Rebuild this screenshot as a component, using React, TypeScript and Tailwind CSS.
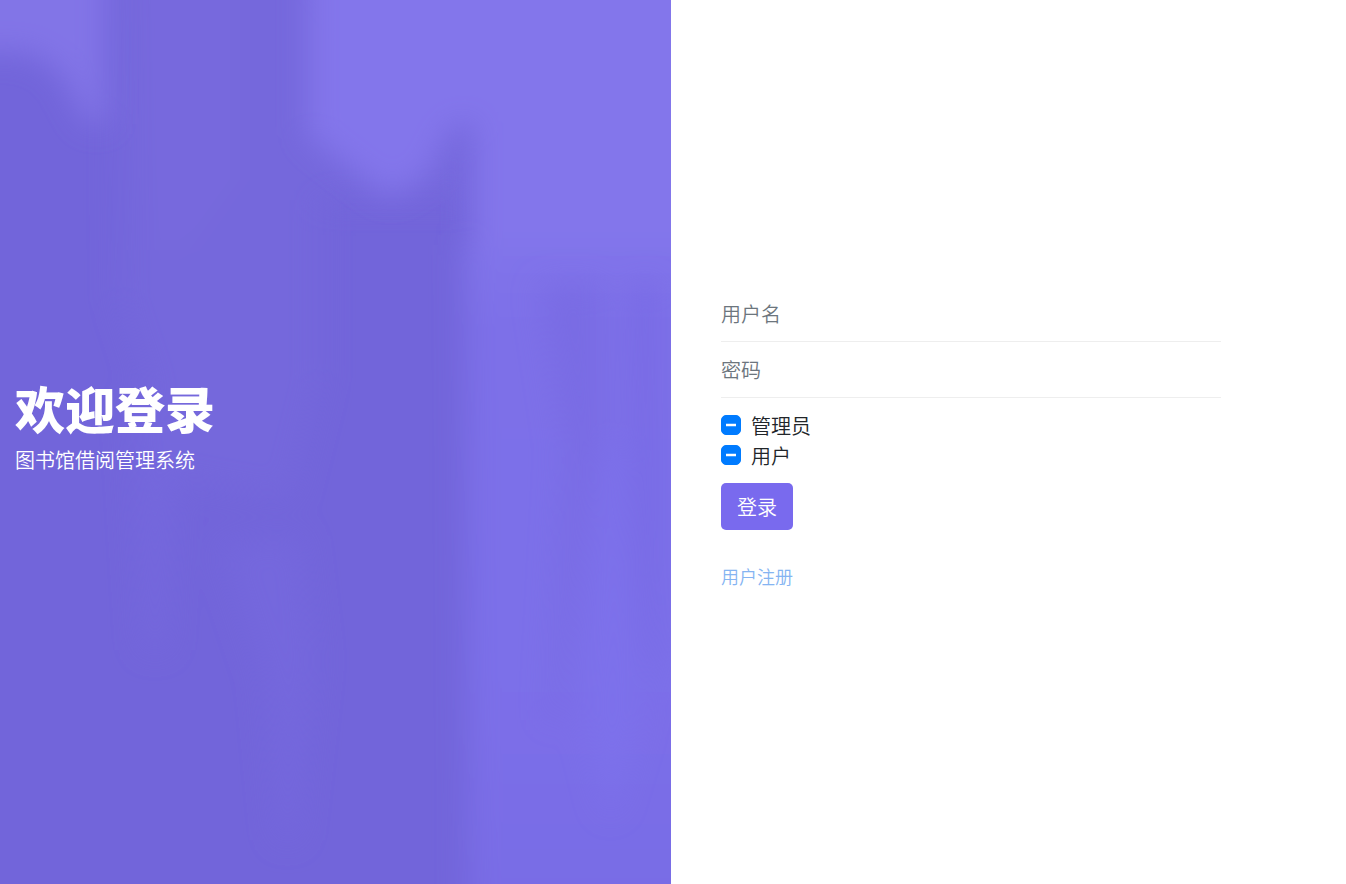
import { useState } from 'react'
import type { ComponentProps } from 'react'

const roles = [
  { id: 'admin', label: '管理员' },
  { id: 'reader', label: '用户' },
]

function Backdrop() {
  return (
    <svg
      aria-hidden="true"
      className="absolute inset-0 h-full w-full"
      viewBox="0 0 671 884"
      preserveAspectRatio="none"
    >
      <defs>
        <filter id="soft" x="-30%" y="-30%" width="160%" height="160%">
          <feGaussianBlur stdDeviation="15" />
        </filter>
        <filter id="softer" x="-100%" y="-50%" width="300%" height="200%">
          <feGaussianBlur stdDeviation="15" />
        </filter>
        <linearGradient id="shelf" x1="0" y1="0" x2="0" y2="1">
          <stop offset="0" stopColor="#8174ea" />
          <stop offset="0.12" stopColor="#7d70e8" />
          <stop offset="0.6" stopColor="#7c6fe9" />
          <stop offset="1" stopColor="#786ce5" />
        </linearGradient>
      </defs>
      <rect width="671" height="884" fill="#7265da" />
      <g filter="url(#softer)">
        <path d="M118 -40H300L470 150V200H320V380L290 500L180 480L120 300Z" fill="#7568dc" />
        <path d="M130 -40H240V180L190 250H150Z" fill="#7769dd" />
        <path d="M130 400H180L165 650H145Z" fill="#7568dd" />
        <path d="M220 545L300 535L315 660L295 840H280L265 680Z" fill="#7467dd" />
      </g>
      <g filter="url(#soft)">
        <path d="M-50 -50H106V124H88L60 72L28 52H-50Z" fill="#8275e7" />
        <path d="M308 -50H720V250H472V120L450 130L428 175L390 197L350 168L308 135Z" fill="#8376eb" />
        <path d="M464 245H720V940H468Z" fill="url(#shelf)" />
      </g>
      <g filter="url(#softer)">
        <path d="M540 285H602V440L560 720H550L565 450Z" fill="#796ce4" />
        <path d="M632 285H658V640L650 700L635 560Z" fill="#786be5" />
        <path d="M600 450H620L640 720L610 820L585 720Z" fill="#7d71eb" />
      </g>
    </svg>
  )
}

function Field(props: ComponentProps<'input'>) {
  return (
    <input
      {...props}
      aria-label={props.placeholder}
      className="block h-14 w-full border-b border-[#eee] bg-transparent text-[#495057] outline-none placeholder:text-[#6c757d] focus:border-[#796aee]"
    />
  )
}

function RoleCheckbox({ id, label }: { id: string; label: string }) {
  const [checked, setChecked] = useState(true)
  return (
    <div className="flex h-[30px] items-center gap-2.5">
      <span className="mb-0.5 grid size-5 place-items-center">
        <input
          id={id}
          type="checkbox"
          checked={checked}
          onChange={(e) => setChecked(e.target.checked)}
          className="col-start-1 row-start-1 size-5 appearance-none rounded-[5px] border border-[#adb5bd] bg-white checked:border-[#007bff] checked:bg-[#007bff]"
        />
        {checked && (
          <svg
            viewBox="0 0 4 4"
            className="pointer-events-none col-start-1 row-start-1 size-2.5"
          >
            <path stroke="#fff" d="M0 2h4" />
          </svg>
        )}
      </span>
      <label htmlFor={id}>{label}</label>
    </div>
  )
}

export default function App() {
  return (
    <main className="mr-1 grid min-h-screen grid-cols-2 bg-white font-['Noto_Sans_CJK_SC','Noto_Sans',sans-serif] text-xl/[30px] font-[350] text-[#212529]">
      {/* welcome */}
      <section className="relative flex flex-col justify-center overflow-hidden bg-[#7265da] text-white">
        <Backdrop />
        <div className="relative px-[15px] pb-8">
          <h1 className="mb-2 text-[50px]/[60px] font-black">欢迎登录</h1>
          <p>图书馆借阅管理系统</p>
        </div>
      </section>

      {/* login form */}
      <section className="flex flex-col justify-center px-[50px]">
        <form className="w-full max-w-[500px] pb-[7px]" onSubmit={(e) => e.preventDefault()}>
          <Field type="text" name="username" placeholder="用户名" />
          <Field type="password" name="password" placeholder="密码" />
          <div className="mt-[13px] mb-3">
            {roles.map((role) => (
              <RoleCheckbox key={role.id} {...role} />
            ))}
          </div>
          <button
            type="submit"
            className="block h-[47px] rounded-[5px] bg-[#796aee] px-4 text-white"
          >
            登录
          </button>
          <a href="#register" className="mt-[31px] inline-block text-lg/[30px] text-[#85b4f2]">
            用户注册
          </a>
        </form>
      </section>
    </main>
  )
}
